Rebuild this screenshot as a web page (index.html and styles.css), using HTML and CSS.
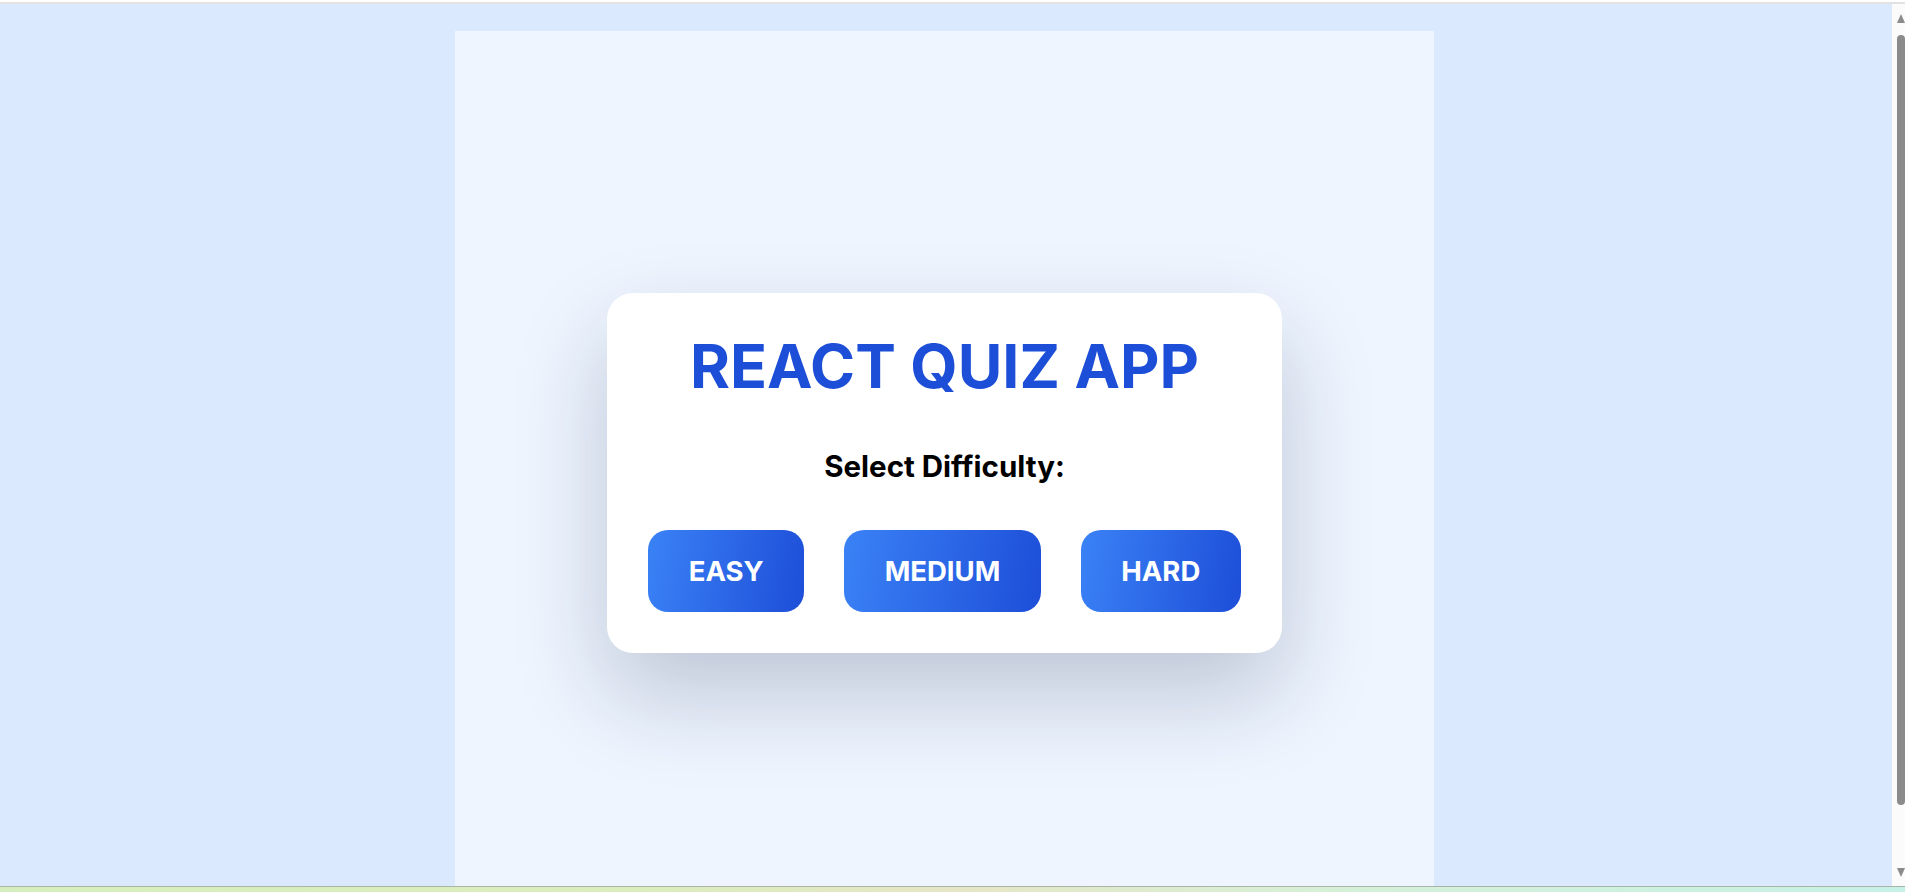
FILE: index.html
```html
<!DOCTYPE html>
<html lang="en">
<head>
<meta charset="utf-8">
<title>React Quiz App</title>
<link rel="stylesheet" href="styles.css">
</head>
<body>
<div class="window">
  <div class="chrome-top"></div>
  <div class="viewport">
    <main class="page">
      <div class="column">
        <section class="card">
          <h1 class="title">REACT QUIZ APP</h1>
          <h2 class="subtitle">Select Difficulty:</h2>
          <div class="levels">
            <button class="level" type="button">EASY</button>
            <button class="level" type="button">MEDIUM</button>
            <button class="level" type="button">HARD</button>
          </div>
        </section>
      </div>
    </main>
    <div class="scrollbar">
      <svg class="arrow" width="8" height="11" viewBox="0 0 8 11"><path d="M4 1 L8 10 L0 10 Z" fill="#8b8b8b"/></svg>
      <div class="track"><div class="thumb"></div></div>
      <svg class="arrow" width="8" height="11" viewBox="0 0 8 11"><path d="M0 1 L8 1 L4 10 Z" fill="#8b8b8b"/></svg>
    </div>
  </div>
  <div class="taskbar"></div>
</div>
</body>
</html>
```

FILE: styles.css
```css
* { box-sizing: border-box; }

html, body {
  margin: 0;
  padding: 0;
  height: 100%;
  overflow: hidden;
}

body {
  font-family: Inter, "Noto Sans", "Liberation Sans", sans-serif;
  background: #ffffff;
}

.window {
  height: 892px;
  display: flex;
  flex-direction: column;
}

.chrome-top {
  height: 4px;
  flex: none;
  background: #ffffff;
  border-top: 2px solid #ffffff;
  border-bottom: 2px solid #e2e2e2;
}

.viewport {
  flex: 1;
  display: flex;
  min-height: 0;
}

.page {
  flex: 1;
  overflow: hidden;
  background: #dbe9fe;
  padding-right: 3px;
}

.column {
  width: 979px;
  height: 884px;
  margin: 27px auto 0;
  background: #eef5ff;
  display: flex;
  align-items: center;
  justify-content: center;
}

.card {
  background: #ffffff;
  border-radius: 26px;
  padding: 37px 41px 41px;
  box-shadow: 0 42px 92px rgba(15, 30, 60, 0.21);
  display: flex;
  flex-direction: column;
  align-items: center;
}

.title {
  margin: 0;
  font-size: 61px;
  line-height: 1.2;
  font-weight: 700;
  color: #1d4ed8;
  letter-spacing: 0;
}

.subtitle {
  margin: 46px 0 0;
  font-size: 29.5px;
  line-height: 1.2;
  font-weight: 700;
  color: #000000;
}

.levels {
  display: flex;
  gap: 40px;
  margin-top: 46px;
}

.level {
  border: none;
  border-radius: 20px;
  height: 82px;
  padding: 0 40.5px;
  font-family: inherit;
  font-size: 27.5px;
  font-weight: 700;
  color: #ffffff;
  background: linear-gradient(100deg, #3b82f6 0%, #1d4ed8 100%);
  cursor: pointer;
}

.scrollbar {
  width: 13px;
  flex: none;
  background: #fbfbfb;
  display: flex;
  flex-direction: column;
  align-items: flex-end;
  padding: 9px 0 8px;
}

.arrow {
  display: block;
  flex: none;
}

.track {
  flex: 1;
  width: 8px;
  padding: 11px 0 62px;
}

.thumb {
  height: 100%;
  background: #8b8b8b;
  border-radius: 4px;
}

.taskbar {
  height: 6px;
  flex: none;
  border-top: 1px solid #a9b3a6;
  background: linear-gradient(90deg, #d6eebd 0%, #dbecbd 35%, #e6e6c6 50%, #d6f0d8 70%, #c6f1e6 100%);
}
```
